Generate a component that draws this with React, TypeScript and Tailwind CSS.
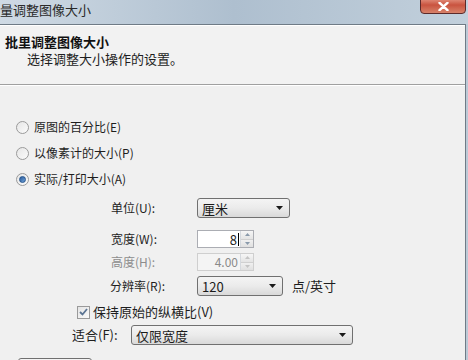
import React from "react";

const font = { fontFamily: '"Noto Sans CJK SC", "Noto Sans", sans-serif' };

function Radio({ checked }: { checked?: boolean }) {
  return (
    <span className="relative w-[13px] h-[13px] rounded-full border border-[#9a9a9a] bg-gradient-to-br from-[#e6e6e6] to-[#fbfbfb] flex items-center justify-center shrink-0">
      {checked && (
        <span className="w-[7px] h-[7px] rounded-full bg-gradient-to-br from-[#2a5c9a] to-[#6ea0d8] border border-[#23538c]" />
      )}
    </span>
  );
}

function Arrow() {
  return (
    <svg width="7" height="4" viewBox="0 0 7 4">
      <path d="M0 0 H7 L3.5 4 Z" fill="#1a1a1a" />
    </svg>
  );
}

function Select({ text, w }: { text: string; w: string }) {
  return (
    <div
      className={`${w} h-[20px] rounded-[3px] border border-[#707070] bg-gradient-to-b from-[#f4f4f4] via-[#ebebeb] to-[#d9d9d9] flex items-center justify-between pl-[4px] pr-[6px] text-[13px] text-[#1a1a1a]`}
    >
      <span className="leading-none">{text}</span>
      <Arrow />
    </div>
  );
}

function Spin({ disabled }: { disabled?: boolean }) {
  const c = disabled ? "#c4c4c4" : "#8a9aab";
  return (
    <div className="w-[13px] h-full flex flex-col border-l border-[#d5d9de]">
      <div className="flex-1 flex items-center justify-center bg-gradient-to-b from-[#f6f6f6] to-[#e4e4e4] border-b border-[#d0d0d0]">
        <svg width="5" height="3" viewBox="0 0 5 3"><path d="M0 3 L2.5 0 L5 3 Z" fill={c} /></svg>
      </div>
      <div className="flex-1 flex items-center justify-center bg-gradient-to-b from-[#f0f0f0] to-[#e0e0e0]">
        <svg width="5" height="3" viewBox="0 0 5 3"><path d="M0 0 H5 L2.5 3 Z" fill={c} /></svg>
      </div>
    </div>
  );
}

export default function App() {
  return (
    <div className="w-[468px] h-[360px] overflow-hidden bg-[#f0f0f0] flex flex-col text-[12px] text-[#1e1e1e]" style={font}>
      {/* Title bar */}
      <div className="relative h-[24px] shrink-0 bg-gradient-to-r from-[#cfdae4] via-[#aebfcf] to-[#c2d0dc] flex items-start">
        <span className="ml-[0px] mt-[1px] text-[13px] text-[#2a2a2a] leading-[18px]">量调整图像大小</span>
        <div className="absolute left-[420px] top-[-4px] w-[46px] h-[18px] rounded-b-[4px] border border-[#5b2a2a] bg-gradient-to-b from-[#e8a090] via-[#c9533f] to-[#d7826a] flex items-center justify-center pt-[3px]">
          <svg width="11" height="9" viewBox="0 0 11 9">
            <path d="M1.5 0.8 L9.5 8.2 M9.5 0.8 L1.5 8.2" stroke="#ffffff" strokeWidth="2.4" strokeLinecap="round" />
          </svg>
        </div>
      </div>

      {/* Body */}
      <div className="flex-1 flex">
        <div className="w-[466px] border-t border-r border-[#6f7b86] bg-[#f0f0f0] flex flex-col">
          {/* Header */}
          <div className="h-[59px] bg-[#f2f2f2] border-t border-white pl-[5px] pt-[8px] flex flex-col">
            <div className="text-[13px] font-bold leading-[16px] text-[#111]">批里调整图像大小</div>
            <div className="pl-[22px] text-[13px] leading-[17px] text-[#1e1e1e]">选择调整大小操作的设置。</div>
          </div>
          <div className="h-px bg-[#a0a0a0]" />
          <div className="h-px bg-white" />

          {/* Content */}
          <div className="flex flex-col pt-[28px]">
            <div className="h-[26px] flex items-center pl-[16px] gap-[5px]"><Radio /><span>原图的百分比(E)</span></div>
            <div className="h-[26px] flex items-center pl-[16px] gap-[5px]"><Radio /><span>以像素计的大小(P)</span></div>
            <div className="h-[26px] flex items-center pl-[16px] gap-[5px]"><Radio checked /><span>实际/打印大小(A)</span></div>

            <div className="mt-[6px] h-[20px] flex items-center pl-[111px]">
              <span className="w-[86px]">单位(U):</span>
              <Select text="厘米" w="w-[93px]" />
            </div>

            <div className="mt-[12px] h-[18px] flex items-center pl-[111px]">
              <span className="w-[86px]">宽度(W):</span>
              <div className="w-[57px] h-[18px] border border-[#abadb3] bg-white flex">
                <div className="flex-1 flex items-center justify-end pr-[1px] text-[13px] leading-none">
                  8<span className="w-px h-[13px] bg-black ml-[1px]" />
                </div>
                <Spin />
              </div>
            </div>

            <div className="mt-[5px] h-[18px] flex items-center pl-[111px] text-[#8d8d8d]">
              <span className="w-[86px]">高度(H):</span>
              <div className="w-[57px] h-[18px] border border-[#cfcfcf] bg-[#f4f4f4] flex">
                <div className="flex-1 flex items-center justify-end pr-[2px] text-[12px] leading-none text-[#8a8a8a]">4.00</div>
                <Spin disabled />
              </div>
            </div>

            <div className="mt-[5px] h-[20px] flex items-center pl-[110px]">
              <span className="w-[87px]">分辨率(R):</span>
              <Select text="120" w="w-[86px]" />
              <span className="ml-[9px] text-[13px]">点/英寸</span>
            </div>

            <div className="mt-[8px] h-[16px] flex items-center pl-[77px] gap-[3px]">
              <span className="w-[13px] h-[13px] border border-[#9a9a9a] bg-gradient-to-br from-[#e4e4e4] to-[#fafafa] flex items-center justify-center">
                <svg width="9" height="8" viewBox="0 0 9 8">
                  <path d="M1 4 L3.5 6.5 L8 1" stroke="#5b7493" strokeWidth="1.8" fill="none" />
                </svg>
              </span>
              <span className="text-[13px]">保持原始的纵横比(V)</span>
            </div>

            <div className="mt-[5px] h-[20px] flex items-center pl-[72px]">
              <span className="w-[59px] text-[13px]">适合(F):</span>
              <Select text="仅限宽度" w="w-[222px]" />
            </div>

            <div className="mt-[13px] ml-[18px] w-[74px] h-[22px] rounded-[3px] border border-[#707070] bg-gradient-to-b from-[#f4f4f4] to-[#e0e0e0]" />
          </div>
        </div>
        <div className="flex-1 bg-[#bccad7]" />
      </div>
    </div>
  );
}
